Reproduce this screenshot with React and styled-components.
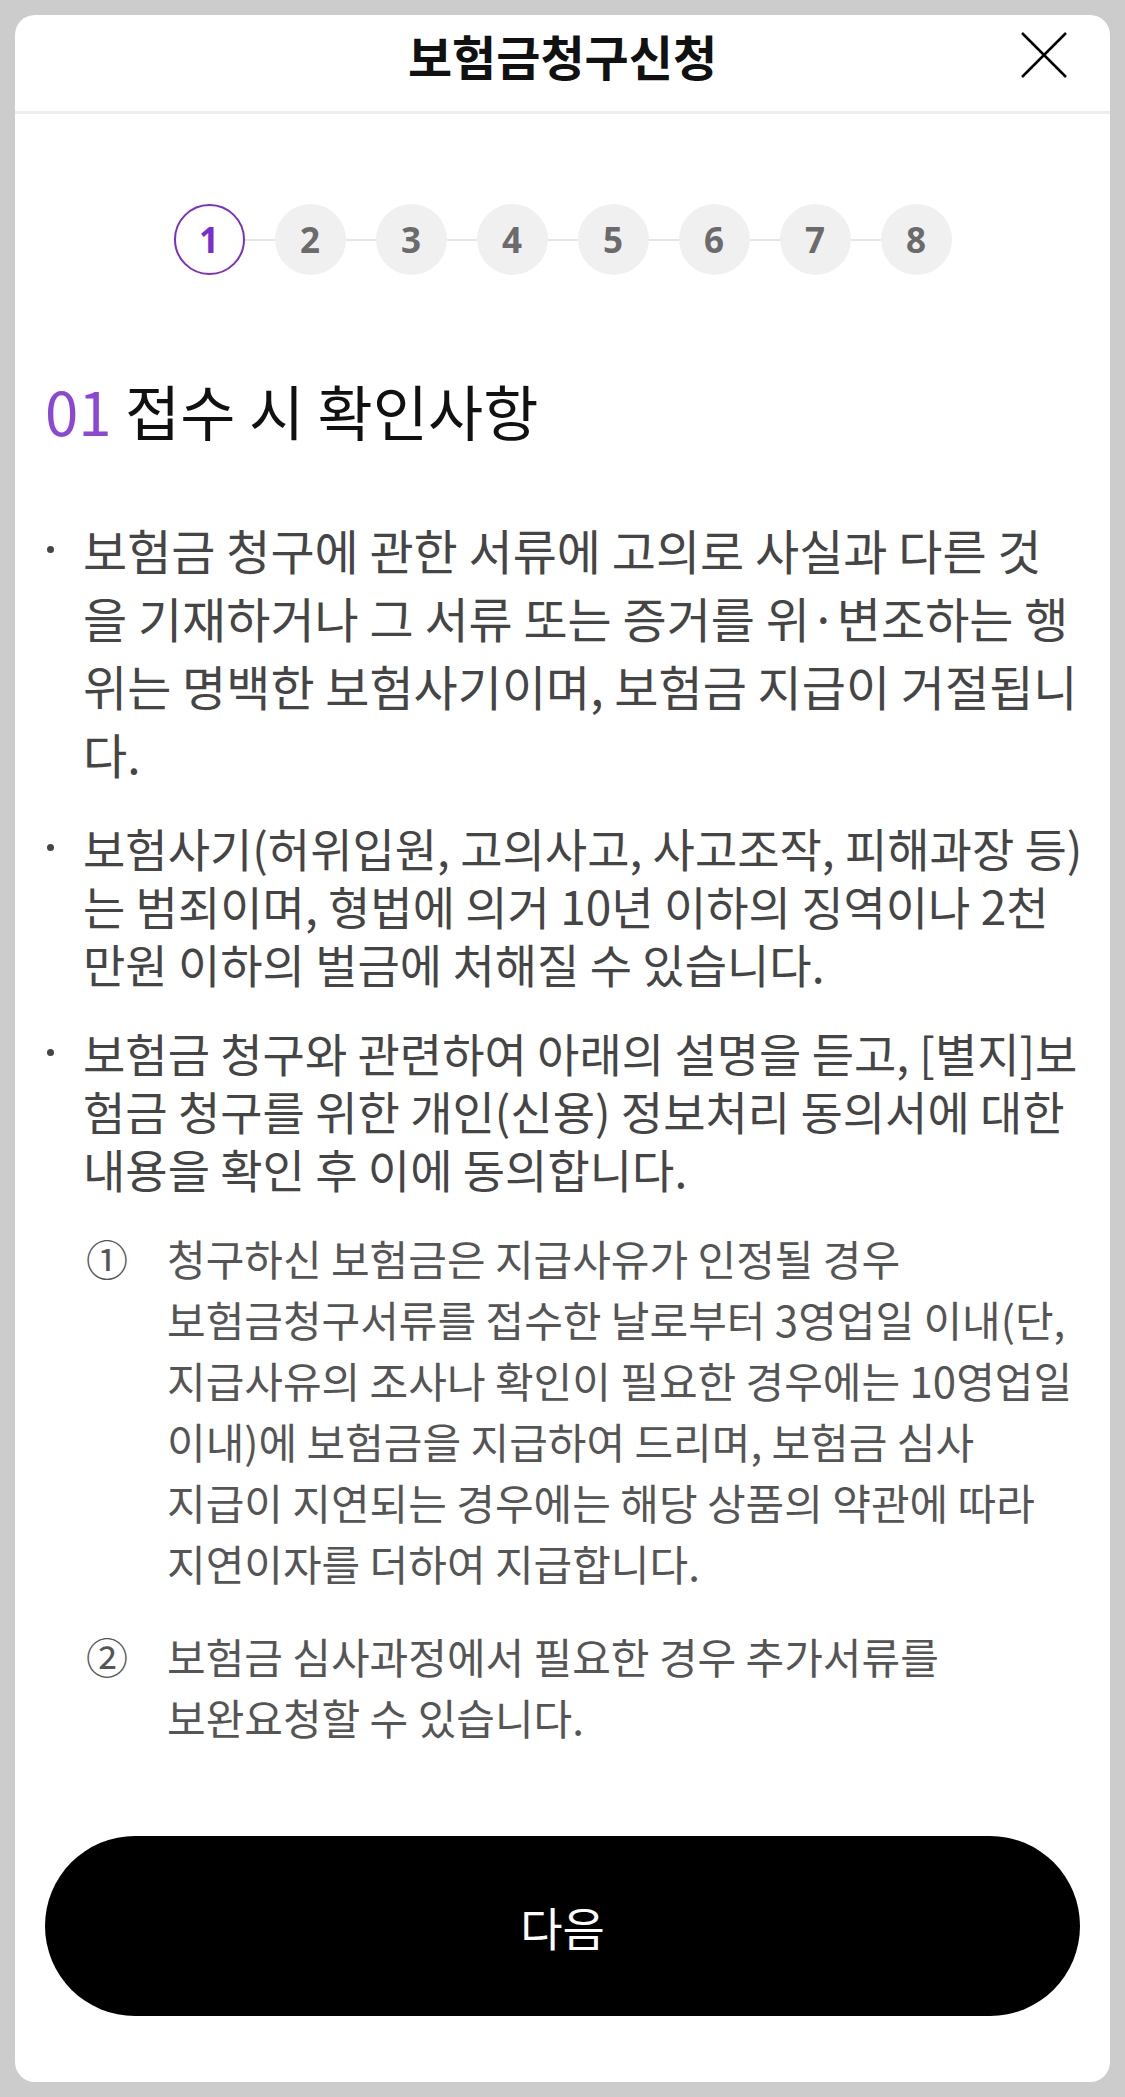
import React from 'react';
import styled, { createGlobalStyle } from 'styled-components';

const GlobalStyle = createGlobalStyle`
  html, body {
    margin: 0;
    padding: 0;
    background: #cccccc;
    font-family: "Noto Sans CJK KR", "Noto Sans", sans-serif;
  }
`;

const Page = styled.div`
  padding: 15px;
`;

const Card = styled.div`
  height: 2067px;
  background: #fff;
  border-radius: 20px;
  display: flex;
  flex-direction: column;
  overflow: hidden;
`;

const Header = styled.header`
  height: 99px;
  padding-bottom: 16px;
  box-sizing: border-box;
  display: grid;
  grid-template-columns: 1fr auto 1fr;
  align-items: center;
  border-bottom: 3px solid #eeeeee;
`;

const Title = styled.h1`
  grid-column: 2;
  margin: 0;
  font-size: 48px;
  line-height: 1;
  font-weight: 700;
  color: #111;
`;

const CloseButton = styled.button`
  grid-column: 3;
  justify-self: end;
  margin-right: 42px;
  width: 48px;
  height: 48px;
  padding: 0;
  border: 0;
  background: none;
  display: flex;
`;

const Body = styled.div`
  flex: 1;
  display: flex;
  flex-direction: column;
  padding: 0 30px 66px;
`;

const Stepper = styled.ol`
  list-style: none;
  margin: 90px 0 0;
  padding: 0;
  display: flex;
  justify-content: center;
  align-items: center;
`;

const Connector = styled.span`
  width: 30px;
  height: 2px;
  background: #e6e6e6;
`;

const Step = styled.li`
  width: 71px;
  height: 71px;
  box-sizing: border-box;
  border-radius: 50%;
  display: flex;
  align-items: center;
  justify-content: center;
  font-family: "Noto Sans", sans-serif;
  font-weight: 700;
  font-size: 35px;
  background: ${p => (p.$active ? '#fff' : '#f0f0f0')};
  border: ${p => (p.$active ? '2.5px solid #7b2ec9' : 'none')};
  color: ${p => (p.$active ? '#7b2ec9' : '#6b6b6b')};
`;

const Heading = styled.h2`
  margin: 96px 0 0;
  font-size: 60px;
  line-height: 78px;
  font-weight: 400;
  color: #111;
`;

const Num = styled.span`
  color: #8b48d4;
`;

const Bullets = styled.ul`
  list-style: none;
  margin: 66px 0 0;
  padding: 0;
  display: flex;
  flex-direction: column;
  gap: 31px;
`;

const Bullet = styled.li`
  display: grid;
  grid-template-columns: 38px 1fr;
  font-size: ${p => p.$size}px;
  line-height: ${p => p.$lh}px;
  color: #454545;
`;

const DotCell = styled.span`
  height: ${p => p.$lh}px;
  display: flex;
  align-items: center;
  padding-left: 2px;

  &::before {
    content: '';
    width: 7px;
    height: 7px;
    border-radius: 50%;
    background: #454545;
  }
`;

const Lines = styled.span`
  white-space: pre;
`;

const Numbered = styled.ol`
  list-style: none;
  margin: 30px 0 0;
  padding: 0 0 0 38px;
  display: flex;
  flex-direction: column;
  gap: 32px;
`;

const NumItem = styled.li`
  display: grid;
  grid-template-columns: 84px 1fr;
  font-size: 42px;
  line-height: 61px;
  color: #555;
`;

const Marker = styled.span`
  padding-left: 3px;
  font-size: 42px;
  color: #555;
`;

const NextButton = styled.button`
  margin-top: auto;
  width: 100%;
  height: 180px;
  border: 0;
  border-radius: 90px;
  background: #000;
  color: #fff;
  font-family: "Noto Sans CJK KR", "Noto Sans", sans-serif;
  font-size: 46px;
  font-weight: 400;
`;

const steps = [1, 2, 3, 4, 5, 6, 7, 8];

const bullets = [
  {
    size: 48,
    lh: 68,
    text: '보험금 청구에 관한 서류에 고의로 사실과 다른 것\n을 기재하거나 그 서류 또는 증거를 위·변조하는 행\n위는 명백한 보험사기이며, 보험금 지급이 거절됩니\n다.',
  },
  {
    size: 46,
    lh: 58,
    text: '보험사기(허위입원, 고의사고, 사고조작, 피해과장 등)\n는 범죄이며, 형법에 의거 10년 이하의 징역이나 2천\n만원 이하의 벌금에 처해질 수 있습니다.',
  },
  {
    size: 46,
    lh: 58,
    text: '보험금 청구와 관련하여 아래의 설명을 듣고, [별지]보\n험금 청구를 위한 개인(신용) 정보처리 동의서에 대한\n내용을 확인 후 이에 동의합니다.',
  },
];

const numbered = [
  {
    mark: '①',
    text: '청구하신 보험금은 지급사유가 인정될 경우\n보험금청구서류를 접수한 날로부터 3영업일 이내(단,\n지급사유의 조사나 확인이 필요한 경우에는 10영업일\n이내)에 보험금을 지급하여 드리며, 보험금 심사\n지급이 지연되는 경우에는 해당 상품의 약관에 따라\n지연이자를 더하여 지급합니다.',
  },
  {
    mark: '②',
    text: '보험금 심사과정에서 필요한 경우 추가서류를\n보완요청할 수 있습니다.',
  },
];

export default function App() {
  return (
    <Page>
      <GlobalStyle />
      <Card>
        <Header>
          <Title>보험금청구신청</Title>
          <CloseButton aria-label="닫기">
            <svg width="48" height="48" viewBox="0 0 48 48">
              <path d="M2 2 L46 46 M46 2 L2 46" stroke="#000" strokeWidth="2.5" fill="none" />
            </svg>
          </CloseButton>
        </Header>
        <Body>
          <Stepper>
            {steps.map((n, i) => (
              <React.Fragment key={n}>
                {i > 0 && <Connector />}
                <Step $active={n === 1}>{n}</Step>
              </React.Fragment>
            ))}
          </Stepper>

          <Heading>
            <Num>01</Num> 접수 시 확인사항
          </Heading>

          <Bullets>
            {bullets.map((b, i) => (
              <Bullet key={i} $size={b.size} $lh={b.lh}>
                <DotCell $lh={b.lh} />
                <Lines>{b.text}</Lines>
              </Bullet>
            ))}
          </Bullets>

          <Numbered>
            {numbered.map(item => (
              <NumItem key={item.mark}>
                <Marker>{item.mark}</Marker>
                <Lines>{item.text}</Lines>
              </NumItem>
            ))}
          </Numbered>

          <NextButton>다음</NextButton>
        </Body>
      </Card>
    </Page>
  );
}
